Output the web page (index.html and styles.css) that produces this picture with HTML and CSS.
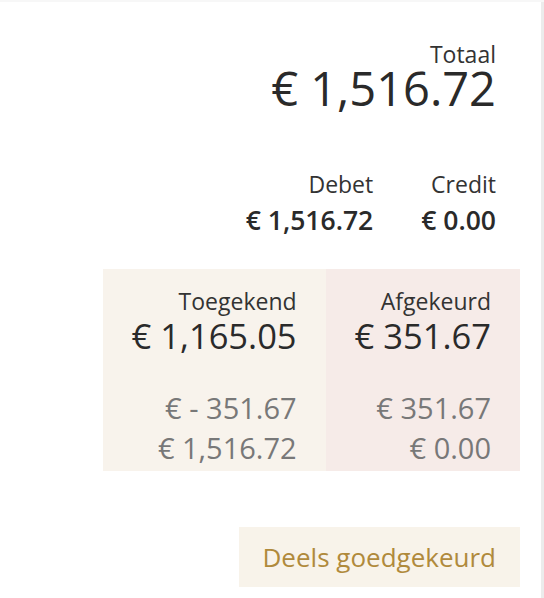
FILE: index.html
```html
<!DOCTYPE html>
<html lang="nl">
<head>
<meta charset="utf-8">
<title>Totaal</title>
<link rel="stylesheet" href="styles.css">
</head>
<body>
<div class="page">
  <main class="panel">
    <section class="total">
      <div class="total-label">Totaal</div>
      <div class="total-value">€ 1,516.72</div>
    </section>

    <section class="balance">
      <div class="balance-col">
        <div class="balance-label">Debet</div>
        <div class="balance-value">€ 1,516.72</div>
      </div>
      <div class="balance-col">
        <div class="balance-label">Credit</div>
        <div class="balance-value">€ 0.00</div>
      </div>
    </section>

    <section class="split">
      <div class="split-box granted">
        <div class="split-label">Toegekend</div>
        <div class="split-value">€ 1,165.05</div>
        <div class="split-sub first">€ - 351.67</div>
        <div class="split-sub">€ 1,516.72</div>
      </div>
      <div class="split-box rejected">
        <div class="split-label">Afgekeurd</div>
        <div class="split-value">€ 351.67</div>
        <div class="split-sub first">€ 351.67</div>
        <div class="split-sub">€ 0.00</div>
      </div>
    </section>

    <section class="status-row">
      <div class="status">Deels goedgekeurd</div>
    </section>
  </main>
  <div class="edge"></div>
</div>
</body>
</html>
```

FILE: styles.css
```css
html, body {
  margin: 0;
  padding: 0;
  background: #ffffff;
}

body {
  font-family: "Open Sans", "Noto Sans", sans-serif;
  color: #2a2a2a;
}

.page {
  display: flex;
  height: 598px;
  border-top: 2px solid #f7f7f7;
  box-sizing: border-box;
}

.panel {
  width: 520px;
  display: flex;
  flex-direction: column;
  align-items: flex-end;
  padding-top: 38px;
}

.edge {
  margin-left: 21px;
  width: 3px;
  background: #ececec;
}

.total {
  padding-right: 24px;
  text-align: right;
}

.total-label {
  font-size: 23px;
  line-height: 28px;
  color: #333333;
}

.total-value {
  font-size: 47px;
  line-height: 41px;
  color: #2a2a2a;
}

.balance {
  display: flex;
  gap: 48px;
  margin-top: 61px;
  padding-right: 24px;
}

.balance-col {
  text-align: right;
}

.balance-label {
  font-size: 23px;
  line-height: 28px;
  color: #333333;
}

.balance-value {
  margin-top: 6px;
  font-size: 26.5px;
  line-height: 32px;
  font-weight: 600;
  color: #2a2a2a;
}

.split {
  display: flex;
  margin-top: 33px;
}

.split-box {
  padding: 17px 29px 3px 29px;
  text-align: right;
}

.granted {
  background: #f8f3ec;
}

.rejected {
  background: #f6ebe8;
}

.split-label {
  font-size: 23px;
  line-height: 30px;
  color: #333333;
}

.split-value {
  font-size: 34.5px;
  line-height: 40px;
  color: #2a2a2a;
}

.split-sub {
  font-size: 29px;
  line-height: 40px;
  color: #787878;
}

.split-sub.first {
  margin-top: 32px;
}

.status-row {
  margin-top: 56px;
}

.status {
  background: #f8f3ea;
  color: #b08a3c;
  font-size: 26px;
  line-height: 60px;
  padding: 0 24px;
}
```
